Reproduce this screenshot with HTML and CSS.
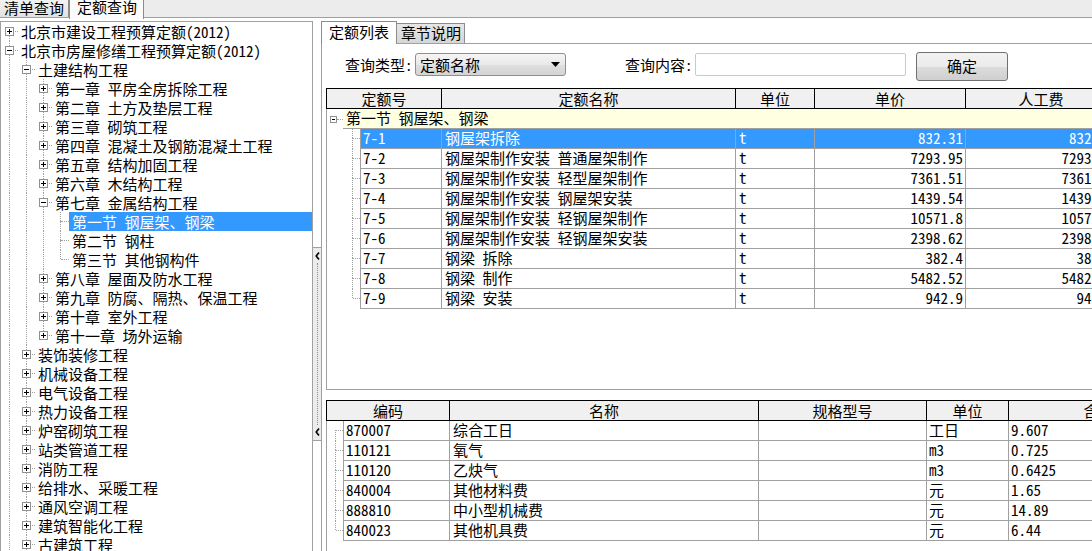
FILE: index.html
```html
<!DOCTYPE html>
<html>
<head>
<meta charset="utf-8">
<title>定额查询</title>
<link rel="stylesheet" href="styles.css">
</head>
<body>
<div class="app">
  <div class="top-tabs">
    <div class="ttab">清单查询</div>
    <div class="ttab active">定额查询</div>
  </div>
  <div class="main">
    <div class="tree">
      <div class="tr"><span class="x vb"><span class="h"></span><span class="bx p"></span></span><span class="t">北京市建设工程预算定额(2012)</span></div>
      <div class="tr"><span class="x vt vb"><span class="h"></span><span class="bx"></span></span><span class="t">北京市房屋修缮工程预算定额(2012)</span></div>
      <div class="tr"><span class="g v"></span><span class="x vt vb"><span class="h"></span><span class="bx"></span></span><span class="t">土建结构工程</span></div>
      <div class="tr"><span class="g v"></span><span class="g v"></span><span class="x vt vb"><span class="h"></span><span class="bx p"></span></span><span class="t">第一章&ensp;平房全房拆除工程</span></div>
      <div class="tr"><span class="g v"></span><span class="g v"></span><span class="x vt vb"><span class="h"></span><span class="bx p"></span></span><span class="t">第二章&ensp;土方及垫层工程</span></div>
      <div class="tr"><span class="g v"></span><span class="g v"></span><span class="x vt vb"><span class="h"></span><span class="bx p"></span></span><span class="t">第三章&ensp;砌筑工程</span></div>
      <div class="tr"><span class="g v"></span><span class="g v"></span><span class="x vt vb"><span class="h"></span><span class="bx p"></span></span><span class="t">第四章&ensp;混凝土及钢筋混凝土工程</span></div>
      <div class="tr"><span class="g v"></span><span class="g v"></span><span class="x vt vb"><span class="h"></span><span class="bx p"></span></span><span class="t">第五章&ensp;结构加固工程</span></div>
      <div class="tr"><span class="g v"></span><span class="g v"></span><span class="x vt vb"><span class="h"></span><span class="bx p"></span></span><span class="t">第六章&ensp;木结构工程</span></div>
      <div class="tr"><span class="g v"></span><span class="g v"></span><span class="x vt vb"><span class="h"></span><span class="bx"></span></span><span class="t">第七章&ensp;金属结构工程</span></div>
      <div class="tr"><span class="g v"></span><span class="g v"></span><span class="g v"></span><span class="x vt vb"><span class="h"></span></span><span class="t sel">第一节&ensp;钢屋架、钢梁</span></div>
      <div class="tr"><span class="g v"></span><span class="g v"></span><span class="g v"></span><span class="x vt vb"><span class="h"></span></span><span class="t">第二节&ensp;钢柱</span></div>
      <div class="tr"><span class="g v"></span><span class="g v"></span><span class="g v"></span><span class="x vt"><span class="h"></span></span><span class="t">第三节&ensp;其他钢构件</span></div>
      <div class="tr"><span class="g v"></span><span class="g v"></span><span class="x vt vb"><span class="h"></span><span class="bx p"></span></span><span class="t">第八章&ensp;屋面及防水工程</span></div>
      <div class="tr"><span class="g v"></span><span class="g v"></span><span class="x vt vb"><span class="h"></span><span class="bx p"></span></span><span class="t">第九章&ensp;防腐、隔热、保温工程</span></div>
      <div class="tr"><span class="g v"></span><span class="g v"></span><span class="x vt vb"><span class="h"></span><span class="bx p"></span></span><span class="t">第十章&ensp;室外工程</span></div>
      <div class="tr"><span class="g v"></span><span class="g v"></span><span class="x vt"><span class="h"></span><span class="bx p"></span></span><span class="t">第十一章&ensp;场外运输</span></div>
      <div class="tr"><span class="g v"></span><span class="x vt vb"><span class="h"></span><span class="bx p"></span></span><span class="t">装饰装修工程</span></div>
      <div class="tr"><span class="g v"></span><span class="x vt vb"><span class="h"></span><span class="bx p"></span></span><span class="t">机械设备工程</span></div>
      <div class="tr"><span class="g v"></span><span class="x vt vb"><span class="h"></span><span class="bx p"></span></span><span class="t">电气设备工程</span></div>
      <div class="tr"><span class="g v"></span><span class="x vt vb"><span class="h"></span><span class="bx p"></span></span><span class="t">热力设备工程</span></div>
      <div class="tr"><span class="g v"></span><span class="x vt vb"><span class="h"></span><span class="bx p"></span></span><span class="t">炉窑砌筑工程</span></div>
      <div class="tr"><span class="g v"></span><span class="x vt vb"><span class="h"></span><span class="bx p"></span></span><span class="t">站类管道工程</span></div>
      <div class="tr"><span class="g v"></span><span class="x vt vb"><span class="h"></span><span class="bx p"></span></span><span class="t">消防工程</span></div>
      <div class="tr"><span class="g v"></span><span class="x vt vb"><span class="h"></span><span class="bx p"></span></span><span class="t">给排水、采暖工程</span></div>
      <div class="tr"><span class="g v"></span><span class="x vt vb"><span class="h"></span><span class="bx p"></span></span><span class="t">通风空调工程</span></div>
      <div class="tr"><span class="g v"></span><span class="x vt vb"><span class="h"></span><span class="bx p"></span></span><span class="t">建筑智能化工程</span></div>
      <div class="tr"><span class="g v"></span><span class="x vt vb"><span class="h"></span><span class="bx p"></span></span><span class="t">古建筑工程</span></div>
    </div>

    <div class="splitter">
      <div class="sbtn">
        <svg class="arr" width="5" height="8" viewBox="0 0 5 8"><path d="M4 0.5 L1.2 4 L4 7.5" fill="none" stroke="#000" stroke-width="1.6"/></svg>
        <div class="grip"></div>
        <svg class="arr" width="5" height="8" viewBox="0 0 5 8"><path d="M4 0.5 L1.2 4 L4 7.5" fill="none" stroke="#000" stroke-width="1.6"/></svg>
      </div>
    </div>

    <div class="right">
      <div class="rtabs">
        <div class="rtab active">定额列表</div>
        <div class="rtab">章节说明</div>
      </div>
      <div class="page">
        <div class="query">
          <span class="lbl">查询类型:</span>
          <div class="combo"><span class="combo-text">定额名称</span><svg class="caret" width="9" height="5" viewBox="0 0 9 5"><path d="M0 0 H9 L4.5 5 Z" fill="#000"/></svg></div>
          <span class="lbl lbl2">查询内容:</span>
          <div class="inp"></div>
          <div class="btn">确定</div>
        </div>

        <div class="t1">
          <div class="hd hd1"><span>定额号</span><span>定额名称</span><span>单位</span><span>单价</span><span>人工费</span></div>
          <div class="bd">
            <div class="grp"><span class="gi"><span class="sbx"></span><span class="hl"></span></span><span class="gt">第一节&ensp;钢屋架、钢梁</span></div>
            <div class="dr sel"><span class="di vt vb"><span class="hl"></span></span><span class="c c1">7-1</span><span class="c">钢屋架拆除</span><span class="c">t</span><span class="c r">832.31</span><span class="c r">832.31</span></div>
            <div class="dr"><span class="di vt vb"><span class="hl"></span></span><span class="c c1">7-2</span><span class="c">钢屋架制作安装&ensp;普通屋架制作</span><span class="c">t</span><span class="c r">7293.95</span><span class="c r">7293.95</span></div>
            <div class="dr"><span class="di vt vb"><span class="hl"></span></span><span class="c c1">7-3</span><span class="c">钢屋架制作安装&ensp;轻型屋架制作</span><span class="c">t</span><span class="c r">7361.51</span><span class="c r">7361.51</span></div>
            <div class="dr"><span class="di vt vb"><span class="hl"></span></span><span class="c c1">7-4</span><span class="c">钢屋架制作安装&ensp;钢屋架安装</span><span class="c">t</span><span class="c r">1439.54</span><span class="c r">1439.54</span></div>
            <div class="dr"><span class="di vt vb"><span class="hl"></span></span><span class="c c1">7-5</span><span class="c">钢屋架制作安装&ensp;轻钢屋架制作</span><span class="c">t</span><span class="c r">10571.8</span><span class="c r">10571.8</span></div>
            <div class="dr"><span class="di vt vb"><span class="hl"></span></span><span class="c c1">7-6</span><span class="c">钢屋架制作安装&ensp;轻钢屋架安装</span><span class="c">t</span><span class="c r">2398.62</span><span class="c r">2398.62</span></div>
            <div class="dr"><span class="di vt vb"><span class="hl"></span></span><span class="c c1">7-7</span><span class="c">钢梁&ensp;拆除</span><span class="c">t</span><span class="c r">382.4</span><span class="c r">382.4</span></div>
            <div class="dr"><span class="di vt vb"><span class="hl"></span></span><span class="c c1">7-8</span><span class="c">钢梁&ensp;制作</span><span class="c">t</span><span class="c r">5482.52</span><span class="c r">5482.52</span></div>
            <div class="dr"><span class="di vt"><span class="hl"></span></span><span class="c c1">7-9</span><span class="c">钢梁&ensp;安装</span><span class="c">t</span><span class="c r">942.9</span><span class="c r">942.9</span></div>
          </div>
        </div>

        <div class="gap"></div>

        <div class="t2">
          <div class="hd hd2"><span>编码</span><span>名称</span><span>规格型号</span><span>单位</span><span>含量</span></div>
          <div class="bd">
            <div class="dr2"><span class="di2 vb"><span class="hl"></span></span><span class="c c1">870007</span><span class="c">综合工日</span><span class="c"></span><span class="c u">工日</span><span class="c u">9.607</span></div>
            <div class="dr2"><span class="di2 vt vb"><span class="hl"></span></span><span class="c c1">110121</span><span class="c">氧气</span><span class="c"></span><span class="c u">m3</span><span class="c u">0.725</span></div>
            <div class="dr2"><span class="di2 vt vb"><span class="hl"></span></span><span class="c c1">110120</span><span class="c">乙炔气</span><span class="c"></span><span class="c u">m3</span><span class="c u">0.6425</span></div>
            <div class="dr2"><span class="di2 vt vb"><span class="hl"></span></span><span class="c c1">840004</span><span class="c">其他材料费</span><span class="c"></span><span class="c u">元</span><span class="c u">1.65</span></div>
            <div class="dr2"><span class="di2 vt vb"><span class="hl"></span></span><span class="c c1">888810</span><span class="c">中小型机械费</span><span class="c"></span><span class="c u">元</span><span class="c u">14.89</span></div>
            <div class="dr2"><span class="di2 vt"><span class="hl"></span></span><span class="c c1">840023</span><span class="c">其他机具费</span><span class="c"></span><span class="c u">元</span><span class="c u">6.44</span></div>
          </div>
        </div>
      </div>
    </div>
  </div>
</div>
</body>
</html>
```
FILE: styles.css
```css
* { box-sizing: border-box; }
html, body { margin: 0; padding: 0; }
body {
  width: 1092px;
  height: 551px;
  overflow: hidden;
  background: #fff;
  color: #000;
  font-family: "Noto Sans CJK SC", "Noto Sans", sans-serif;
  font-size: 15px;
  font-feature-settings: "hwid" 1;
}
.app { width: 1092px; height: 551px; display: flex; flex-direction: column; overflow: hidden; }

/* top tabs */
.top-tabs {
  flex: none;
  height: 18px;
  display: flex;
  align-items: flex-start;
  background: #ececec;
  border-bottom: 1px solid #a0a0a0;
}
.ttab {
  width: 69px;
  height: 17px;
  padding-left: 4px;
  line-height: 15px;
  white-space: nowrap;
  background: linear-gradient(#f3f3f3, #e1e1e1);
  border-right: 1px solid #8c8c8c;
}
.ttab.active {
  width: 75px;
  height: 19px;
  margin-bottom: -1px;
  padding-left: 7px;
  line-height: 13px;
  background: #fbfbfb;
  border-left: 1px solid #8c8c8c;
  border-right: 1px solid #8c8c8c;
  position: relative;
}

/* main */
.main { flex: 1; display: flex; padding-top: 3px; min-height: 0; overflow: hidden; }

.tree {
  flex: none;
  width: 313px;
  height: 545px;
  border: 1px solid #a0a0a0;
  background: #fff;
}
.tr { display: flex; height: 19px; }
.g, .x { position: relative; flex: none; width: 17px; height: 19px; }
.g.v::before {
  content: ""; position: absolute; left: 8px; top: 0; bottom: 0;
  border-left: 1px dotted #a0a0a0;
}
.x::before, .x::after {
  content: ""; position: absolute; left: 8px; display: none;
  border-left: 1px dotted #a0a0a0;
}
.x::before { top: 0; height: 9px; }
.x::after { top: 9px; bottom: 0; }
.x.vt::before { display: block; }
.x.vb::after { display: block; }
.x .h {
  position: absolute; left: 9px; right: 0; top: 9px;
  border-top: 1px dotted #a0a0a0;
}
.bx {
  position: absolute; left: 4px; top: 5px; width: 9px; height: 9px;
  border: 1px solid #919191; background: #fff; z-index: 1;
}
.bx::before {
  content: ""; position: absolute; left: 1px; top: 3px; width: 5px; height: 1px; background: #000;
}
.bx.p::after {
  content: ""; position: absolute; left: 3px; top: 1px; width: 1px; height: 5px; background: #000;
}
.t {
  flex: 1;
  padding-left: 3px;
  line-height: 19px;
  white-space: nowrap;
}
.t.sel { background: #3399ff; color: #fff; }

/* splitter */
.splitter { flex: none; width: 8px; padding-top: 226px; }
.sbtn {
  height: 194px;
  border-top: 1px solid #a0a0a0;
  border-bottom: 1px solid #a0a0a0;
  background: #ececec;
  display: flex; flex-direction: column; align-items: center;
  padding: 4px 0 4px;
}
.arr { flex: none; display: block; }
.grip { flex: 1; width: 1px; margin: 3px 0; border-left: 1px dotted #6f8fbf; }

/* right panel */
.right { flex: 1; display: flex; flex-direction: column; min-width: 0; }
.rtabs {
  flex: none; height: 23px; display: flex; align-items: flex-start;
  border-bottom: 1px solid #a0a0a0;
}
.rtab {
  width: 68px; height: 20px; margin-top: 2px;
  padding-left: 4px; line-height: 18px; white-space: nowrap;
  background: linear-gradient(#e6e6e6, #d6d6d6);
  border-top: 1px solid #8c8c8c; border-right: 1px solid #8c8c8c;
}
.rtab.active {
  width: 76px; height: 23px; margin-top: 0; margin-bottom: -1px;
  padding-left: 7px; line-height: 20px;
  background: #fff;
  border-left: 1px solid #8c8c8c;
  position: relative;
}
.page {
  flex: 1; display: flex; flex-direction: column; min-height: 0;
  border-left: 1px solid #a0a0a0;
}
.query {
  flex: none; height: 44px; display: flex; align-items: flex-start;
  padding-left: 23px;
}
.lbl { flex: none; width: 70px; margin-top: 9px; line-height: 23px; white-space: nowrap; }
.lbl2 { margin-left: 59px; }
.combo {
  flex: none; width: 151px; height: 23px; margin-top: 9px;
  border: 1px solid #8e8f8f; border-radius: 3px;
  background: linear-gradient(#f5f5f5, #e9e9e9 50%, #dfdfdf 51%, #d4d4d4);
  display: flex; align-items: center; padding-left: 4px; padding-right: 5px;
}
.combo-text { flex: 1; line-height: 20px; }
.caret { flex: none; display: block; }
.inp {
  flex: none; width: 211px; height: 23px; margin-top: 9px;
  border: 1px solid #c9c9c9; border-radius: 2px; background: #fff;
}
.btn {
  flex: none; width: 92px; height: 29px; margin-top: 8px; margin-left: 10px;
  border: 1px solid #707070; border-radius: 3px;
  background: linear-gradient(#f2f2f2, #ebebeb 50%, #dddddd 51%, #cfcfcf);
  text-align: center; line-height: 26px;
}

/* grids */
.t1 {
  flex: none; height: 302px; width: 900px; margin-left: 4px;
  border-bottom: 1px solid #a0a0a0;
  display: flex; flex-direction: column;
}
.t2 {
  flex: 1; width: 900px; margin-left: 4px;
  display: flex; flex-direction: column;
}
.gap { flex: none; height: 10px; }
.hd {
  flex: none; display: grid; height: 21px;
  border-top: 1px solid #000; border-bottom: 1px solid #000; border-left: 1px solid #000;
  background: #f0f0f0;
}
.hd1 { grid-template-columns: 115px 294px 79px 151px 151px; }
.hd2 { grid-template-columns: 123px 309px 168px 82px 180px; }
.hd span {
  border-right: 1px solid #000; text-align: center; line-height: 19px; white-space: nowrap;
}
.bd { flex: 1; border-left: 1px solid #a0a0a0; }

.grp { display: flex; height: 20px; }
.gi { position: relative; flex: none; width: 16px; }
.sbx {
  position: absolute; left: 3px; top: 7px; width: 7px; height: 7px;
  border: 1px solid #919191; background: #fff;
}
.sbx::before {
  content: ""; position: absolute; left: 1px; top: 2px; width: 3px; height: 1px; background: #000;
}
.gi .hl { position: absolute; left: 10px; right: 0; top: 10px; border-top: 1px dotted #a0a0a0; }
.gt {
  flex: 1; background: #ffffe1; border-bottom: 1px solid #a0a0a0;
  padding-left: 3px; line-height: 18px; white-space: nowrap;
}

.dr { display: grid; grid-template-columns: 33px 82px 294px 79px 151px 151px; height: 20px; }
.dr2 { display: grid; grid-template-columns: 16px 107px 309px 168px 82px 180px; height: 20px; }
.c {
  border-right: 1px solid #a0a0a0; border-bottom: 1px solid #a0a0a0;
  padding: 0 2px 0 3px; line-height: 18px; white-space: nowrap;
}
.c1 { border-left: 1px solid #a0a0a0; padding-left: 2px; }
.c.r { text-align: right; padding-right: 2px; }
.c.u { padding-left: 2px; }
.dr.sel .c { background: #3399ff; color: #fff; }

.di, .di2 { position: relative; }
.di::before, .di::after, .di2::before, .di2::after {
  content: ""; position: absolute; display: none; border-left: 1px dotted #a0a0a0;
}
.di::before, .di::after { left: 25px; }
.di2::before, .di2::after { left: 8px; }
.di::before, .di2::before { top: 0; height: 9px; }
.di::after, .di2::after { top: 9px; bottom: 0; }
.vt::before { display: block; }
.vb::after { display: block; }
.di .hl { position: absolute; left: 26px; right: 0; top: 9px; border-top: 1px dotted #a0a0a0; }
.di2 .hl { position: absolute; left: 9px; right: 0; top: 9px; border-top: 1px dotted #a0a0a0; }
```
